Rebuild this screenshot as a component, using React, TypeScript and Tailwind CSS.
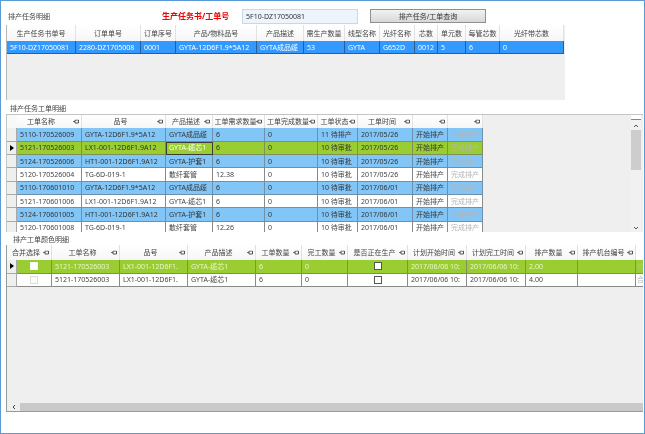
const font = { fontFamily: '"Noto Sans", "Noto Sans CJK SC", sans-serif' };

function Pin() {
  return (
    <svg width="6" height="5" viewBox="0 0 6 5" className="absolute right-[2px] top-1/2 -translate-y-1/2">
      <path d="M2 .5h3.5v3H2zM.2 2h1.8" fill="none" stroke="#555" strokeWidth="1" />
    </svg>
  );
}

function Head({ t, pin = false, first = false }: { t: string; pin?: boolean; first?: boolean }) {
  return (
    <div className="relative flex items-center justify-center overflow-visible whitespace-nowrap border-r border-[#e2e2e2] bg-gradient-to-b from-white to-[#f6f6f6] text-[#444]">
      <span className={first ? "-translate-x-[5px] pr-[6px]" : pin ? "pr-[6px]" : ""}>{t}</span>
      {pin && <Pin />}
    </div>
  );
}

function Cell({ t, cls, selected }: { t: string; cls: string; selected?: boolean }) {
  return (
    <div className={`flex items-center overflow-hidden whitespace-nowrap border-b border-r px-[3px] ${cls} ${selected ? "outline outline-1 -outline-offset-1 outline-[#3c3c3c]" : ""}`}>
      {t}
    </div>
  );
}

function RowHead({ active }: { active?: boolean }) {
  return (
    <div className="flex items-center justify-center border-b border-r border-[#a8a8a8] bg-[#efefef]">
      {active && <div className="h-0 w-0 border-y-[3px] border-l-[4px] border-y-transparent border-l-black" />}
    </div>
  );
}

function Check({ box, cls }: { box: string; cls: string }) {
  return (
    <div className={`flex items-center justify-center border-b border-r ${cls}`}>
      <div className={`h-[8px] w-[8px] border ${box}`} />
    </div>
  );
}

const head1 = ["生产任务书单号", "订单单号", "订单序号", "产品/物料品号", "产品描述", "需生产数量", "线型名称", "光纤名称", "芯数", "单元数", "每管芯数", "光纤带芯数"];
const row1 = ["5F10-DZ17050081", "2280-DZ1705008", "0001", "GYTA-12D6F1.9*5A12", "GYTA成品缆", "53", "GYTA", "G652D", "0012", "5", "6", "0"];

const head2 = ["工单名称", "品号", "产品描述", "工单需求数量", "工单完成数量", "工单状态", "工单时间", "", ""];
const rows2 = [
  ["5110-170526009", "GYTA-12D6F1.9*5A12", "GYTA成品缆", "6", "0", "11 待排产", "2017/05/26", "b"],
  ["5121-170526003", "LX1-001-12D6F1.9A12", "GYTA-缆芯1", "6", "0", "10 待审批", "2017/05/26", "g"],
  ["5124-170526006", "HT1-001-12D6F1.9A12", "GYTA-护套1", "6", "0", "10 待审批", "2017/05/26", "b"],
  ["5120-170526004", "TG-6D-019-1", "散纤套管", "12.38", "0", "10 待审批", "2017/05/26", "w"],
  ["5110-170601010", "GYTA-12D6F1.9*5A12", "GYTA成品缆", "6", "0", "10 待审批", "2017/06/01", "b"],
  ["5121-170601006", "LX1-001-12D6F1.9A12", "GYTA-缆芯1", "6", "0", "10 待审批", "2017/06/01", "w"],
  ["5124-170601005", "HT1-001-12D6F1.9A12", "GYTA-护套1", "6", "0", "10 待审批", "2017/06/01", "b"],
  ["5120-170601008", "TG-6D-019-1", "散纤套管", "12.26", "0", "10 待审批", "2017/06/01", "w"],
];
const bg: Record<string, string> = {
  b: "bg-[#82c6f8] border-[#6f8fa8] text-[#333]",
  g: "bg-[#9acd32] border-[#7f8f5a] text-[#333]",
  w: "bg-white border-[#8a8a8a] text-[#444]",
};

const head3 = ["合并选择", "工单名称", "品号", "产品描述", "工单数量", "完工数量", "是否正在生产", "计划开始时间", "计划完工时间", "排产数量", "排产机台编号"];

export default function App() {
  return (
    <div style={font} className="flex h-[434px] w-[645px] flex-col overflow-hidden border border-[#5b9bd5] bg-white pb-[21px] pl-[5px] pr-[1px] text-[7px] leading-none text-[#444] blur-[0.3px]">
      <div className="flex h-[24px] shrink-0 items-center pt-[6px]">
        <span className="ml-[2px] w-[154px]">排产任务明细</span>
        <span className="w-[80px] text-[8px] font-bold text-[#f00000]">生产任务书/工单号</span>
        <div className="flex h-[15px] w-[116px] items-center border border-[#c5d8ee] bg-[#eef4fc] px-[3px] text-[#333]">5F10-DZ17050081</div>
        <button className="ml-[12px] h-[14px] w-[116px] border border-[#8f8f8f] bg-gradient-to-b from-[#f2f2f2] to-[#d8d8d8] text-[7px] text-[#333]">排产任务/工单查询</button>
      </div>

      <div className="h-[75px] w-[559px] shrink-0 border-l border-[#b5b5b5] bg-[#efefef]">
        <div className="grid h-[16px] grid-cols-[69px_65px_35px_81px_47px_41px_35px_35px_23px_28px_34px_64px]">
          {head1.map((t, i) => <Head key={i} t={t} />)}
        </div>
        <div className="grid h-[13px] grid-cols-[69px_65px_35px_81px_47px_41px_35px_35px_23px_28px_34px_64px]">
          {row1.map((t, i) => <Cell key={i} t={t} cls="bg-[#3399ff] border-[#2a5f96] text-white" />)}
        </div>
      </div>

      <div className="flex h-[14px] shrink-0 items-center pl-[4px] pt-[3px]">排产任务工单明细</div>

      <div className="flex h-[118px] shrink-0 overflow-hidden border-l border-t border-[#c4c4c4] bg-[#efefef]">
        <div className="grid w-[476px] auto-rows-[13.35px] grid-cols-[10px_65px_84px_47px_52px_53px_40px_55px_35px_35px]">
          <div className="bg-[#f8f8f8]" />
          {head2.map((t, i) => <Head key={i} t={t} pin first={i === 0} />)}
          {rows2.map((r, i) => {
            const c = bg[r[7]];
            return [
              <RowHead key={`h${i}`} active={i === 1} />,
              <Cell key={`a${i}`} t={r[0]} cls={c} />,
              <Cell key={`b${i}`} t={r[1]} cls={c} />,
              <Cell key={`c${i}`} t={r[2]} cls={i === 1 ? `${c} text-white` : c} selected={i === 1} />,
              <Cell key={`d${i}`} t={r[3]} cls={c} />,
              <Cell key={`e${i}`} t={r[4]} cls={c} />,
              <Cell key={`f${i}`} t={r[5]} cls={c} />,
              <Cell key={`g${i}`} t={r[6]} cls={c} />,
              <Cell key={`i${i}`} t="开始排产" cls={c} />,
              <Cell key={`j${i}`} t="完成排产" cls={`${c} text-[#b4b4b4]`} />,
            ];
          })}
        </div>
        <div className="flex-1" />
        <div className="mr-[2px] flex w-[10px] shrink-0 flex-col items-center bg-[#f1f1f1]">
          <div className="h-[5px] w-full border-b border-[#888] bg-white" />
          <svg width="6" height="9" viewBox="0 0 6 9" className="mt-[1px]"><path d="M1 6l2-2 2 2" fill="none" stroke="#555" /></svg>
          <div className="h-[40px] w-full bg-[#cdcdcd]" />
          <div className="flex-1" />
          <svg width="6" height="7" viewBox="0 0 6 7"><path d="M1 2l2 2 2-2" fill="none" stroke="#555" /></svg>
        </div>
      </div>

      <div className="flex h-[13px] shrink-0 items-center pl-[7px] pt-[1px]">排产工单颜色明细</div>

      <div className="flex min-h-0 flex-1 flex-col border-l border-[#9a9a9a] bg-[#efefef]">
        <div className="grid h-[15px] grid-cols-[10px_35px_68px_68px_68px_46px_46px_60px_59px_59px_52px_58px_1fr]">
          <div className="bg-[#f8f8f8]" />
          {head3.map((t, i) => <Head key={i} t={t} pin first={i === 0} />)}
          <div className="bg-white" />
        </div>
        <div className="grid auto-rows-[13.5px] grid-cols-[10px_35px_68px_68px_68px_46px_46px_60px_59px_59px_52px_58px_1fr]">
          {[["2.00", "g"], ["4.00", "w"]].map(([n, k], i) => {
            const c = bg[k];
            const t = i === 0 ? `${c} text-[#eaf5d0]` : c;
            return [
              <RowHead key={`h${i}`} active={i === 0} />,
              <Check key={`k${i}`} cls={c} box={i === 0 ? "border-[#f4f4f4] bg-white" : "border-[#dcdcdc] bg-[#fbfbfb]"} />,
              <Cell key={`a${i}`} t="5121-170526003" cls={t} />,
              <Cell key={`b${i}`} t="LX1-001-12D6F1." cls={t} />,
              <Cell key={`c${i}`} t="GYTA-缆芯1" cls={t} />,
              <Cell key={`d${i}`} t="6" cls={t} />,
              <Cell key={`e${i}`} t="0" cls={t} />,
              <Check key={`m${i}`} cls={c} box="border-[#555] bg-white" />,
              <Cell key={`f${i}`} t="2017/06/06 10:" cls={t} />,
              <Cell key={`g${i}`} t="2017/06/06 10:" cls={t} />,
              <Cell key={`n${i}`} t={n} cls={t} />,
              <Cell key={`o${i}`} t="" cls={t} />,
              <Cell key={`p${i}`} t="合" cls={`${t} !border-r-0 !px-[1px] !text-[#b8b8b8]`} />,
            ];
          })}
        </div>
        <div className="flex-1" />
        <div className="flex h-[9px] shrink-0 border-b border-[#9a9a9a] bg-[#c9c9c9]">
          <div className="flex w-[13px] items-center justify-center bg-[#efefef]">
            <svg width="4" height="6" viewBox="0 0 4 6"><path d="M3 1L1 3l2 2" fill="none" stroke="#444" /></svg>
          </div>
        </div>
      </div>
    </div>
  );
}
